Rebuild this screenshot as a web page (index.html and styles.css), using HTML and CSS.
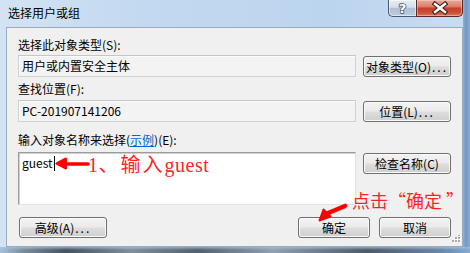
FILE: index.html
```html
<!DOCTYPE html>
<html lang="zh-CN">
<head>
<meta charset="utf-8">
<title>选择用户或组</title>
<link rel="stylesheet" href="styles.css">
</head>
<body>
<div class="window">
  <div class="titlebar">
    <span class="title">选择用户或组</span>
    <div class="caption-buttons">
      <div class="cap cap-help">
        <svg class="cap-glyph" width="27" height="17" viewBox="0 0 27 17">
          <text x="13.5" y="13" text-anchor="middle" class="help-q">?</text>
        </svg>
      </div>
      <div class="cap cap-close">
        <svg class="cap-glyph" width="46" height="17" viewBox="0 0 46 17">
          <path d="M18 4 L28 12 M28 4 L18 12" class="x-outline"/>
          <path d="M18 4 L28 12 M28 4 L18 12" class="x-fill"/>
        </svg>
      </div>
    </div>
  </div>

  <div class="client">
    <div class="label">选择此对象类型(S):</div>
    <div class="fieldrow fieldrow-1">
      <div class="field readonly">用户或内置安全主体</div>
      <button class="btn btn-side">对象类型(O)<span class="dots">...</span></button>
    </div>

    <div class="label label-2">查找位置(F):</div>
    <div class="fieldrow fieldrow-2">
      <div class="field readonly">PC-201907141206</div>
      <button class="btn btn-side">位置(L)<span class="dots">...</span></button>
    </div>

    <div class="label label-3">输入对象名称来选择(<a class="link">示例</a>)(E):</div>
    <div class="fieldrow fieldrow-3">
      <div class="textarea">guest<span class="caret"></span></div>
      <button class="btn btn-side btn-check">检查名称(C)</button>
    </div>

    <div class="bottom-row">
      <button class="btn btn-side">高级(A)<span class="dots">...</span></button>
      <div class="ok-cancel">
        <button class="btn btn-dlg">确定</button>
        <button class="btn btn-dlg">取消</button>
      </div>
    </div>

    <svg class="grip" width="10" height="10" viewBox="0 0 10 10">
      <rect x="8" y="0" width="2" height="2" class="grip-hi"/>
      <rect x="7" y="-1" width="2" height="2" class="grip-dot"/>
      <rect x="5" y="3" width="2" height="2" class="grip-hi"/>
      <rect x="4" y="2" width="2" height="2" class="grip-dot"/>
      <rect x="8" y="3" width="2" height="2" class="grip-hi"/>
      <rect x="7" y="2" width="2" height="2" class="grip-dot"/>
      <rect x="2" y="6" width="2" height="2" class="grip-hi"/>
      <rect x="1" y="5" width="2" height="2" class="grip-dot"/>
      <rect x="5" y="6" width="2" height="2" class="grip-hi"/>
      <rect x="4" y="5" width="2" height="2" class="grip-dot"/>
      <rect x="8" y="6" width="2" height="2" class="grip-hi"/>
      <rect x="7" y="5" width="2" height="2" class="grip-dot"/>
    </svg>
  </div>

  <div class="frame-bottom"></div>

  <svg class="annot-arrows" width="470" height="253" viewBox="0 0 470 253">
    <line x1="64" y1="164" x2="88" y2="164" class="arrow-shaft"/>
    <polygon points="56.5,163.5 66,158.5 66,168.5" class="arrow-head"/>
    <line x1="345" y1="206" x2="327" y2="213.5" class="arrow-shaft arrow-shaft-2"/>
    <polygon points="319.5,220.5 323.5,209.5 330.5,216.5" class="arrow-head"/>
  </svg>
  <div class="annot annot-1"><span class="annot-lat">1</span><span class="annot-cjk">、输入</span><span class="annot-lat">guest</span></div>
  <div class="annot annot-2">点击“确定<span class="q-close">”</span></div>
</div>
</body>
</html>
```

FILE: styles.css
```css
* { box-sizing: border-box; }

html, body {
  margin: 0;
  padding: 0;
}

body {
  width: 470px;
  height: 253px;
  overflow: hidden;
  font-family: "Noto Sans CJK SC", "Microsoft YaHei", sans-serif;
  font-size: 12px;
  color: #000;
}

.window {
  position: relative;
  width: 470px;
  height: 253px;
  display: flex;
  flex-direction: column;
  background:
    linear-gradient(to right, rgba(0,0,0,0) 463px, #8fb2d8 463px, #6f99c7 466px, #86acd5 470px),
    linear-gradient(to right, #d3e3f4 0%, #c2d9f0 30%, #bcd5ee 70%, #c6dcf2 100%);
}

/* ---------- title bar ---------- */
.titlebar {
  height: 27px;
  display: flex;
  align-items: flex-start;
  flex-shrink: 0;
}

.title {
  margin-top: 4px;
  padding-left: 8px;
  line-height: 17px;
  font-size: 12px;
  color: #000;
}

.caption-buttons {
  margin-left: auto;
  margin-right: 7px;
  display: flex;
  height: 17px;
}

.cap {
  height: 17px;
  border: 1px solid #4a5a70;
  border-top: none;
}

.cap-help {
  width: 28px;
  border-right: none;
  border-bottom-left-radius: 5px;
  background: linear-gradient(to bottom, #e6ecf3 0%, #d6dfea 45%, #afc0d4 52%, #bccde0 100%);
  box-shadow: inset 0 0 0 1px rgba(255,255,255,0.5);
}

.cap-close {
  width: 47px;
  border-color: #5b2a26;
  border-bottom-right-radius: 5px;
  background: linear-gradient(to bottom, #eaa99b 0%, #dc806c 40%, #c6402b 52%, #cd5038 80%, #dc7a5e 100%);
  box-shadow: inset 0 0 0 1px rgba(255,220,210,0.45);
}

.cap-glyph {
  display: block;
}

.help-q {
  font-family: "DejaVu Sans", sans-serif;
  font-weight: bold;
  font-size: 13px;
  fill: #ffffff;
  stroke: #4a5a70;
  stroke-width: 1.6px;
  paint-order: stroke;
}

.x-outline {
  stroke: #3a2020;
  stroke-width: 4.6;
  stroke-linecap: square;
  fill: none;
}

.x-fill {
  stroke: #ffffff;
  stroke-width: 2.4;
  stroke-linecap: square;
  fill: none;
}

/* ---------- client area ---------- */
.client {
  position: relative;
  margin: 0 7px 0 6px;
  height: 220px;
  flex-shrink: 0;
  background: #f0f0f0;
  border: 1px solid #9aabbf;
  padding: 9px 11px 0 11px;
}

.label {
  height: 16px;
  line-height: 16px;
  white-space: nowrap;
}

.label-2 { margin-top: 4px; }
.label-3 { margin-top: 10px; }

.link {
  color: #0066cc;
  text-decoration: underline;
}

.fieldrow {
  display: flex;
  gap: 7px;
  align-items: flex-end;
}

.fieldrow-1 { margin-top: 2px; }
.fieldrow-2 { margin-top: 3px; }
.fieldrow-3 {
  margin-top: 4px;
  align-items: flex-start;
}

.field {
  width: 338px;
  height: 22px;
  line-height: 20px;
  padding-left: 3px;
  white-space: nowrap;
}

.readonly {
  background: #f3f3f3;
  border: 1px solid #d2d2d2;
  border-top-color: #c6c6c6;
  box-shadow: inset 1px 1px 0 #fbfbfb;
}

.textarea {
  width: 338px;
  height: 53px;
  background: #ffffff;
  border-top: 1px solid #9c9c9c;
  border-left: 1px solid #9c9c9c;
  border-right: 1px solid #e2e2e2;
  border-bottom: 1px solid #e2e2e2;
  box-shadow: inset 1px 1px 0 #cfcfcf;
  padding: 2px 3px;
  line-height: 16px;
}

.caret {
  display: inline-block;
  width: 1px;
  height: 15px;
  margin-left: 1px;
  background: #000;
  vertical-align: -3px;
}

/* ---------- buttons ---------- */
.btn {
  height: 21px;
  padding: 0;
  margin: 0;
  font-family: "Noto Sans CJK SC", "Microsoft YaHei", sans-serif;
  font-size: 12px;
  line-height: 19px;
  color: #000;
  border: 1px solid #707070;
  border-radius: 3px;
  background: linear-gradient(to bottom, #f3f3f3 0%, #ebebeb 48%, #dddddd 52%, #cfcfcf 100%);
  box-shadow: inset 0 0 0 1px #fafafa;
  white-space: nowrap;
  flex-shrink: 0;
}

.btn-side { width: 88px; }
.btn-dlg { width: 72px; }
.btn-check { margin-top: 1px; }

.dots {
  letter-spacing: 2px;
  margin-left: 1px;
}

.bottom-row {
  margin-top: 12px;
  padding-left: 1px;
  display: flex;
  justify-content: space-between;
  align-items: center;
}

.ok-cancel {
  display: flex;
  gap: 9px;
}

.grip {
  position: absolute;
  right: 1px;
  bottom: 1px;
}

.grip-dot { fill: #a9a9a9; }
.grip-hi { fill: #ffffff; }

/* ---------- bottom frame ---------- */
.frame-bottom {
  height: 6px;
  flex-shrink: 0;
  background:
    linear-gradient(to bottom, rgba(170,198,228,0.7) 0, rgba(170,198,228,0) 3px),
    linear-gradient(to right, #a6c2df 0, #7a8c9e 5%, #46525e 14%, #828f9b 28%, #535f6c 42%, #8fa0b2 58%, #4d5a68 78%, #6b87a6 94%, #84aad3 100%);
}

/* ---------- annotations ---------- */
.annot-arrows {
  position: absolute;
  left: 0;
  top: 0;
  pointer-events: none;
}

.arrow-shaft {
  stroke: #ff0000;
  stroke-width: 3.6;
  stroke-linecap: round;
}

.arrow-shaft-2 {
  stroke-width: 4.6;
}

.arrow-head {
  fill: #ff0000;
  stroke: #ff0000;
  stroke-width: 2;
  stroke-linejoin: round;
}

.annot {
  position: absolute;
  color: #ff2424;
  white-space: nowrap;
  line-height: 20px;
}

.annot-1 {
  left: 88px;
  top: 154px;
}

.annot-cjk {
  font-family: "Noto Sans CJK SC", sans-serif;
  font-size: 20px;
  letter-spacing: 2px;
}

.annot-lat {
  font-family: "Liberation Serif", serif;
  font-size: 20px;
  letter-spacing: 0.5px;
}

.annot-2 {
  left: 352px;
  top: 190px;
  font-family: "Noto Sans CJK SC", sans-serif;
  font-size: 18px;
}

.q-close {
  padding-left: 4px;
}
```
